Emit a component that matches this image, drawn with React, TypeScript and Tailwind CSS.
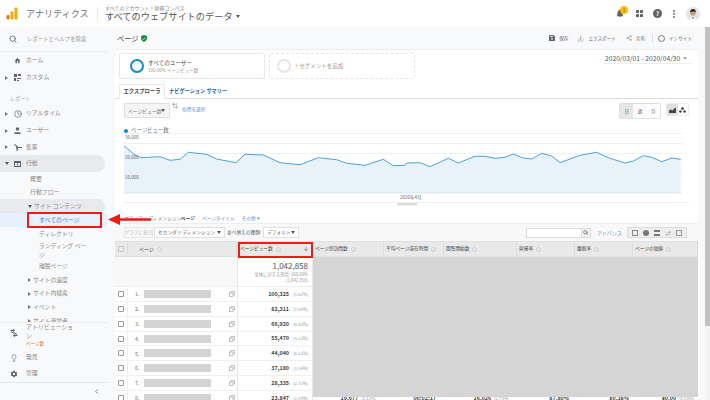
import { Search, Clock, Lightbulb, ChevronLeft, Download, Share2, ArrowDown } from "lucide-react";

const z6 = [[42,77],[72,103],[92,113],[150,110],[180,121],[210,118],[235,97],[290,103],[320,117],[378,128],[405,103],[460,105],[510,128],[570,134],[625,113],[680,119],[710,130],[765,136],[820,118],[850,137],[885,136]];
const z7 = [[-10,129],[30,128],[60,140],[115,115],[145,129],[195,109],[225,109],[255,115],[285,112],[310,102],[340,114],[365,117],[395,100],[425,108],[450,128],[510,106],[560,97],[595,113],[645,129],[670,123],[700,107],[725,112],[755,125],[785,114],[812,118]];
const pts = [
  ...z6.map(([x, y]) => [110 + x / 3 - 124, 120 + y / 3 - 133]),
  ...z7.map(([x, y]) => [410 + x / 3 - 124, 120 + y / 3 - 133]),
];
const line = pts.map((p) => p[0].toFixed(1) + "," + p[1].toFixed(1)).join(" ");
const area = "0,60 " + line + " " + pts[pts.length - 1][0].toFixed(1) + ",60";

const rows = [
  ["100,325", "(9.62%)"],
  ["82,311", "(7.89%)"],
  ["66,920", "(6.42%)"],
  ["55,470", "(5.32%)"],
  ["44,040", "(4.22%)"],
  ["37,180", "(3.56%)"],
  ["28,335", "(2.72%)"],
  ["23,847", "(2.29%)"],
];

function Arrow({ open = false }: { open?: boolean }) {
  return open ? (
    <span className="w-0 h-0 border-x-[2px] border-x-transparent border-t-[3px] border-t-[#555] shrink-0" />
  ) : (
    <span className="w-0 h-0 border-y-[2px] border-y-transparent border-l-[3px] border-l-[#777] shrink-0" />
  );
}

function TopItem({ h, label, icon, arrow, open, pill }: { h: string; label: string; icon: React.ReactNode; arrow?: boolean; open?: boolean; pill?: boolean }) {
  return (
    <div className={`${h} flex items-center shrink-0 w-[105px] ${pill ? "bg-[#e8eaed] rounded-r-full" : ""}`}>
      <span className="w-[9px] pl-[5px] flex items-center">{arrow && <Arrow open={open} />}</span>
      <span className="w-[17px] flex justify-center items-center text-[#5f6368]">{icon}</span>
      <span className="text-[5.8px] text-[#8a8a8a]">{label}</span>
    </div>
  );
}

function SubItem({ h, label }: { h: string; label: string }) {
  return (
    <div className={`${h} flex items-center pl-[30px] text-[5.9px] text-[#8a8a8a] shrink-0`}>{label}</div>
  );
}

function GroupItem({ h, label, pill, open }: { h: string; label: string; pill?: boolean; open?: boolean }) {
  return (
    <div className={`${h} flex items-center pl-[28px] gap-[2px] text-[5.8px] text-[#8a8a8a] shrink-0 w-[105px] ${pill ? "bg-[#e8eaed] rounded-r-full" : ""}`}>
      <Arrow open={open} />
      <span>{label}</span>
    </div>
  );
}

function Help() {
  return <span className="inline-block w-[5px] h-[5px] rounded-full border border-[#d0d0d0] ml-[3px] shrink-0" />;
}

function Header() {
  return (
    <div className="h-[27px] flex items-center bg-white shrink-0">
      <svg width="12" height="13" viewBox="0 0 12 13" className="ml-[6px]">
        <rect x="0.5" y="8" width="3" height="4.5" rx="1.4" fill="#e37400" />
        <rect x="4.5" y="4.5" width="3" height="8" rx="1" fill="#f9ab00" />
        <rect x="8.5" y="0.5" width="3" height="12" rx="1" fill="#f9ab00" />
      </svg>
      <span className="ml-[8px] text-[9.1px] text-[#6f7378] w-[65px] whitespace-nowrap">アナリティクス</span>
      <span className="w-px h-[14px] bg-[#e6e6e6] ml-[6px]" />
      <div className="ml-[7px] flex flex-col leading-none -mt-[2px]">
        <span className="text-[5px] text-[#888] leading-[7px]">すべてのアカウント &gt; 財務コンパス</span>
        <span className="text-[9.2px] text-[#555] leading-[11px] flex items-center gap-[3px]">
          すべてのウェブサイトのデータ
          <Arrow open />
        </span>
      </div>
      <div className="ml-auto flex items-center">
        <div className="relative mr-[12px]">
          <svg width="8" height="9" viewBox="0 0 24 24" fill="#5f6368" className="block"><path d="M12 23a2.5 2.5 0 0 0 2.5-2.5h-5A2.5 2.5 0 0 0 12 23zm8-6v-6c0-3.9-2.1-7-5.5-7.8V2a2.5 2.5 0 0 0-5 0v1.2C6 4 4 7.1 4 11v6l-2 2v1h20v-1z" /></svg>
          <span className="absolute -top-[3px] left-[4px] w-[8px] h-[8px] rounded-full bg-[#fbbc04] text-[4.5px] leading-[8px] text-center text-[#444]">1</span>
        </div>
        <svg width="7" height="7" viewBox="0 0 7 7" fill="#5f6368" className="mr-[10px]">
          <rect width="3" height="3" rx="0.4" /><rect x="4" width="3" height="3" rx="0.4" /><rect y="4" width="3" height="3" rx="0.4" /><rect x="4" y="4" width="3" height="3" rx="0.4" />
        </svg>
        <span className="w-[9px] h-[9px] rounded-full bg-[#5f6368] text-white text-[6px] leading-[9px] text-center font-bold mr-[11px]">?</span>
        <svg width="2" height="8" viewBox="0 0 2 8" fill="#5f6368" className="mr-[11px]">
          <circle cx="1" cy="1" r="0.9" /><circle cx="1" cy="4" r="0.9" /><circle cx="1" cy="7" r="0.9" />
        </svg>
        <svg width="14" height="14" viewBox="0 0 14 14" className="mr-[10px]">
          <circle cx="7" cy="7" r="7" fill="#e4e6e6" />
          <path d="M3 14c.4-3 2-4 4-4s3.600 1 4 4z" fill="#f4f4f4" />
          <circle cx="7" cy="6" r="2.600" fill="#c59a7c" />
          <path d="M4.200 5.500C4 2.500 6 2 7.300 2c1.700 0 2.700 1.200 2.500 3.500-1-1.200-4-1.200-5.600 0z" fill="#2c211c" />
          <path d="M6 10.200l1 1.800 1-1.800z" fill="#50606a" />
        </svg>
      </div>
    </div>
  );
}

function Sidebar() {
  return (
    <div className="w-[115px] shrink-0 bg-[#f8f9fa] flex flex-col h-[373px] overflow-hidden">
      <div className="h-[25px] w-[108px] flex items-center border-b border-[#eceef0] shrink-0">
        <Search size={8} strokeWidth={2.5} className="ml-[9px] text-[#5f6368]" />
        <span className="ml-[10px] text-[5.400px] text-[#999]">レポートとヘルプを除索</span>
      </div>
      <div className="h-[270px] overflow-hidden flex flex-col shrink-0">
        <TopItem h="h-[17px]" label="ホーム" icon={<svg width="7" height="7" viewBox="0 0 24 24" fill="#5f6368"><path d="M10 21v-7h4v7h5v-9h3L12 3 2 12h3v9z" /></svg>} />
        <TopItem h="h-[17px]" arrow label="カスタム" icon={<svg width="7" height="7" viewBox="0 0 7 7" fill="#5f6368"><rect width="3" height="3" /><rect x="4" width="3" height="2" /><rect y="4" width="2" height="3" /><rect x="3" y="4" width="4" height="1" /><rect x="3" y="6" width="2" height="1" /></svg>} />
        <div className="h-[19px] shrink-0 flex items-end pb-[2px] pl-[10px] text-[5.200px] text-[#a5a5a5]">レポート</div>
        <TopItem h="h-[17px]" arrow label="リアルタイム" icon={<Clock size={8} strokeWidth={2} />} />
        <TopItem h="h-[17px]" arrow label="ユーザー" icon={<svg width="7" height="7" viewBox="0 0 7 7" fill="#5f6368"><circle cx="3.500" cy="2" r="1.700" /><path d="M0.500 5.300h6V7h-6z" /></svg>} />
        <TopItem h="h-[16px]" arrow label="集客" icon={<svg width="8" height="7" viewBox="0 0 8 7" fill="none" stroke="#5f6368" strokeWidth="1"><path d="M0 1h2c1 0 1 5 2 5H2M3 3.500h5" /><circle cx="3.200" cy="3.500" r="0.800" fill="#5f6368" /></svg>} />
        <TopItem h="h-[17px]" arrow open pill label="行動" icon={<svg width="7" height="6" viewBox="0 0 7 6"><rect width="7" height="6" fill="#5f6368" /><rect x="1" y="2" width="2" height="3" fill="#e8eaed" /><rect x="3.700" y="2" width="2.300" height="3" fill="#e8eaed" /></svg>} />
        <SubItem h="h-[14px]" label="概要" />
        <SubItem h="h-[13px]" label="行動フロー" />
        <GroupItem h="h-[14px]" open pill label="サイト コンテンツ" />
        <div className="h-[14px] w-[107px] bg-[#e8f0fe] flex items-center pl-[39px] text-[5.900px] text-[#3b82e8] shrink-0">すべてのページ</div>
        <div className="h-[14px] flex items-center pl-[39px] text-[5.800px] text-[#8a8a8a] shrink-0">ディレクトリ</div>
        <div className="h-[18px] pl-[39px] w-[88px] text-[5.800px] text-[#8a8a8a] shrink-0 leading-[9px]">ランディング ページ</div>
        <div className="h-[14px] flex items-center pl-[39px] text-[5.800px] text-[#8a8a8a] shrink-0">離脱ページ</div>
        <GroupItem h="h-[14px]" label="サイトの速度" />
        <GroupItem h="h-[13px]" label="サイト内検索" />
        <GroupItem h="h-[14px]" label="イベント" />
        <GroupItem h="h-[14px]" label="サイト運営者" />
      </div>
      <div className="w-[108px] border-t border-[#eceef0] flex flex-col shrink-0">
        <div className="h-[26px] flex">
          <span className="w-[26px] flex justify-center items-center text-[#5f6368] h-[20px] pl-[2px]">
            <svg width="8" height="8" viewBox="0 0 8 8" fill="none" stroke="#5f6368" strokeWidth="1.100"><path d="M0.500 1.500h3.500M3 0.300l1.200 1.200L3 2.700M7.500 6.500H4M5 5.300L3.800 6.500 5 7.700M1.300 2.500c0 2 5.400 1 5.400 3" /></svg>
          </span>
          <div className="flex flex-col">
            <span className="text-[5.900px] text-[#8a8a8a] leading-[8.500px] w-[50px] break-all">アトリビューション</span>
            <span className="text-[4.500px] text-[#e8710a] leading-[6px]">ページ数</span>
          </div>
        </div>
        <TopRow h="h-[17px]" icon={<Lightbulb size={8} strokeWidth={1.800} />} label="発見" />
        <TopRow h="h-[15px]" icon={<svg width="8" height="8" viewBox="0 0 24 24" fill="#5f6368"><path fillRule="evenodd" d="M19.400 13c.1-.3.1-.7.1-1s0-.7-.1-1l2.100-1.600c.2-.2.300-.4.100-.7l-2-3.400c-.1-.2-.4-.3-.6-.2l-2.500 1a7 7 0 0 0-1.700-1l-.4-2.700c0-.2-.2-.4-.5-.4h-4c-.2 0-.4.200-.5.400l-.4 2.700c-.6.200-1.200.6-1.700 1l-2.500-1c-.2-.1-.5 0-.6.200l-2 3.400c-.1.300-.1.500.1.700L4.600 11c-.1.300-.1.700-.1 1s0 .7.100 1l-2.100 1.600c-.2.200-.3.400-.1.700l2 3.400c.1.200.4.300.6.200l2.500-1c.5.400 1.100.8 1.700 1l.4 2.700c0 .2.300.4.500.4h4c.3 0 .5-.2.500-.4l.4-2.700c.6-.2 1.200-.6 1.700-1l2.500 1c.2.100.5 0 .6-.2l2-3.400c.1-.3.1-.5-.1-.7zM12 15.500a3.500 3.500 0 1 1 0-7 3.500 3.500 0 0 1 0 7z" /></svg>} label="管理" />
        <div className="border-t border-[#e4e6e8] h-[17px] flex items-center justify-end pr-[8px] mt-[1px]">
          <ChevronLeft size={7} strokeWidth={2.500} className="text-[#5f6368]" />
        </div>
      </div>
    </div>
  );
}

function TopRow({ h, icon, label }: { h: string; icon: React.ReactNode; label: string }) {
  return (
    <div className={`${h} flex items-center`}>
      <span className="w-[26px] flex justify-center pl-[2px] text-[#5f6368]">{icon}</span>
      <span className="text-[5.800px] text-[#8a8a8a]">{label}</span>
    </div>
  );
}

function Action({ icon, label }: { icon: React.ReactNode; label: string }) {
  return (
    <span className="flex items-center gap-[4px] text-[4.600px] text-[#666]">
      <span className="text-[#5f6368] flex">{icon}</span>
      {label}
    </span>
  );
}

function PageBar() {
  return (
    <div className="h-[23px] bg-[#f8f9fa] border-b border-[#eceef0] flex items-center shrink-0 pl-[2px] pr-[6px]">
      <span className="text-[7.200px] text-[#444]">ページ</span>
      <svg width="6" height="7" viewBox="0 0 7 8" className="ml-[3px]"><path d="M3.500 0L7 1.200v2.600C7 6 5.300 7.400 3.500 8 1.700 7.400 0 6 0 3.800V1.200z" fill="#1e8e3e" /><path d="M1.800 4l1.200 1.200 2.200-2.200" stroke="#fff" strokeWidth="0.800" fill="none" /></svg>
      <div className="ml-auto flex items-center">
        <Action label="保存" icon={<svg width="6" height="6" viewBox="0 0 7 7" fill="#5f6368"><path d="M0 1a1 1 0 0 1 1-1h4.200L7 1.800V6a1 1 0 0 1-1 1H1a1 1 0 0 1-1-1z" /><rect x="1.500" y="1" width="3" height="1.300" fill="#f8f9fa" /><circle cx="3.500" cy="4.500" r="1" fill="#f8f9fa" /></svg>} />
        <span className="w-[9px]" />
        <Action label="エクスポート" icon={<Download size={7} strokeWidth={1.200} />} />
        <span className="w-[10px]" />
        <Action label="共有" icon={<Share2 size={6} strokeWidth={1.300} />} />
        <span className="w-px h-[8px] bg-[#ddd] ml-[7px] mr-[5px]" />
        <Action label="インサイト" icon={<span className="w-[7px] h-[7px] rounded-full border border-[#7a7a7a] block" />} />
      </div>
    </div>
  );
}

function SegmentRow() {
  return (
    <div className="h-[33px] flex shrink-0 pl-[4px] pt-[3px] pr-[6px]">
      <div className="w-[146px] h-[26px] border border-[#e8e8e8] rounded-[2px] flex items-center pl-[10px]">
        <span className="w-[14px] h-[14px] rounded-full border-[2px] border-[#0d8ecf] shrink-0" />
        <div className="ml-[4px] flex flex-col">
          <span className="text-[5.600px] text-[#555] leading-[7px]">すべてのユーザー</span>
          <span className="text-[4.500px] text-[#999] leading-[6px]">100.00% ページビュー数</span>
        </div>
      </div>
      <div className="w-[146px] h-[26px] ml-[4px] border border-dashed border-[#e8e8e8] rounded-[2px] flex items-center pl-[7px]">
        <span className="w-[14px] h-[14px] rounded-full border-[2px] border-[#e6e6e6] shrink-0" />
        <span className="ml-[4px] text-[5.500px] text-[#999]">+ セグメントを追加</span>
      </div>
      <div className="ml-auto h-[11px] border-b border-[#eee] flex items-center gap-[3px] text-[6.700px] text-[#555] pl-[1px] w-[88px] whitespace-nowrap">
        <span>2020/03/01 - 2020/04/30</span>
        <span className="w-0 h-0 border-x-[2px] border-x-transparent border-t-[3px] border-t-[#aaa] shrink-0" />
      </div>
    </div>
  );
}

function Tabs() {
  return (
    <div className="h-[15px] border-b border-[#ddd] flex items-end shrink-0 pl-[4px] mt-[1px]">
      <div className="w-[46px] h-[15px] border border-b-0 border-[#e8e8e8] bg-white -mb-px flex items-center justify-center text-[5.300px] font-bold text-[#444] whitespace-nowrap">エクスプローラ</div>
      <div className="ml-[4px] h-[14px] flex items-center text-[5.200px] font-bold text-[#2a5ea8] whitespace-nowrap">ナビゲーション サマリー</div>
    </div>
  );
}

function Controls() {
  return (
    <div className="h-[24px] flex items-start shrink-0 pl-[9px] pt-[4px] pr-[9px]">
      <div className="w-[46px] h-[15px] border border-[#e0e0e0] bg-[#f5f5f5] flex items-center justify-between pl-[3px] pr-[4px] text-[4.800px] text-[#777] rounded-[1px] whitespace-nowrap">
        ページビュー数
        <Arrow open />
      </div>
      <span className="ml-[2px] text-[6px] text-[#666] leading-[6px]">⇅</span>
      <span className="ml-[4px] mt-[3px] text-[4.700px] text-[#6a9ad4] whitespace-nowrap">指標を選択</span>
      <div className="ml-auto flex gap-[5px]">
        <div className="h-[16px] w-[42px] border border-[#e0e0e0] flex text-[4.500px] text-[#666] rounded-[1px]">
          <span className="flex-1 bg-[#e6e6e6] flex items-center justify-center">日</span>
          <span className="flex-1 flex items-center justify-center bg-[#fafafa]">週</span>
          <span className="flex-1 flex items-center justify-center">月</span>
        </div>
        <div className="h-[13px] w-[23px] border border-[#eee] flex rounded-[1px]">
          <span className="flex-1 bg-[#e0e0e0] flex items-center justify-center">
            <svg width="7" height="6" viewBox="0 0 8 7" fill="#444"><path d="M0 7V4l2-1 2 1 3-3 1 0v6z" /></svg>
          </span>
          <span className="flex-1 flex items-center justify-center">
            <svg width="7" height="6" viewBox="0 0 8 7" fill="#444"><circle cx="4" cy="1.800" r="1.600" /><circle cx="1.600" cy="5.300" r="1.500" /><circle cx="6.400" cy="5.300" r="1.500" /></svg>
          </span>
        </div>
      </div>
    </div>
  );
}

function Chart() {
  return (
    <div className="flex flex-col shrink-0 pl-[9px]">
      <div className="h-[11px] mt-[2px] flex items-center text-[5.400px] text-[#777]">
        <span className="w-[4px] h-[4px] rounded-full bg-[#058dc7] mr-[3px]" />
        ページビュー数
      </div>
      <svg width="566" height="73" viewBox="0 0 566 73" className="block mt-[-3px]" style={{ fontFamily: "'Noto Sans CJK JP'" }}>
        <polygon points={area} fill="#e8f2f9" />
        {[0, 10, 20, 40].map((y) => (
          <line key={y} x1="0" x2="558" y1={y + 0.5} y2={y + 0.5} stroke="#efefef" />
        ))}
        <line x1="0" x2="558" y1="60" y2="60" stroke="#dde4e8" />
        <polyline points={line} fill="none" stroke="#3a9ad2" strokeWidth="0.900" />
        <text x="1" y="6" fontSize="4.500" fill="#666">30,000</text>
        <text x="1" y="25.500" fontSize="4.500" fill="#666">20,000</text>
        <text x="1" y="45.500" fontSize="4.500" fill="#666">10,000</text>
        <text x="276" y="66" fontSize="4.500" fill="#666">2020年4月</text>
        <line x1="0" x2="565" y1="69.500" y2="69.500" stroke="#eee" />
        <rect x="273" y="70" width="20" height="2.500" fill="#dcdcdc" />
      </svg>
    </div>
  );
}

function DimRow() {
  return (
    <div className="h-[13px] mt-[5px] pt-[3px] flex items-center pl-[9px] text-[4.700px] shrink-0 border-b border-[#eeeeee] whitespace-nowrap">
      <span className="text-[#777] w-[57px]">プライマリ ディメンション:</span>
      <span className="text-[#444] font-bold">ページ</span>
      <span className="text-[#6a8ad8] ml-[7px]">ページタイトル</span>
      <span className="text-[#6a8ad8] ml-[7px]">その他 ▾</span>
    </div>
  );
}

function Toolbar() {
  return (
    <div className="h-[17px] bg-[#f8f8f8] flex items-center pl-[9px] pr-[11px] shrink-0 text-[4.700px] text-[#666] whitespace-nowrap">
      <span className="w-[29px] h-[11px] border border-[#e8e8e8] text-[#c4c4c4] flex items-center justify-center">グラフに表示</span>
      <span className="ml-[1px] w-[71px] h-[11px] border border-[#e0e0e0] bg-white flex items-center justify-between px-[3px]">セカンダリ ディメンション<Arrow open /></span>
      <span className="ml-[2px]">並べ替えの種類:</span>
      <span className="ml-[2px] w-[36px] h-[11px] border border-[#e0e0e0] bg-white flex items-center justify-between px-[3px]">デフォルト<Arrow open /></span>
      <div className="ml-auto flex items-center">
        <div className="w-[65px] h-[10px] border border-[#ddd] bg-white flex justify-end">
          <span className="w-[9px] bg-[#f0f0f0] border-l border-[#ddd] flex items-center justify-center"><Search size={5} strokeWidth={3} className="text-[#555]" /></span>
        </div>
        <span className="ml-[6px] text-[#6a9ad4] text-[5px]">アドバンス</span>
        <div className="ml-[5px] w-[60px] h-[11px] border border-[#ddd] bg-[#eee] flex items-center justify-around px-[1px] text-[#777]">
          <span className="w-[6px] h-[6px] border border-[#888] block" />
          <span className="w-[6px] h-[6px] rounded-full bg-[#777] block" />
          <span className="w-[6px] h-[6px] border-t-2 border-b-2 border-[#777] block" />
          <span className="text-[5px] leading-[6px]">⇄</span>
          <span className="w-[6px] h-[6px] border border-[#999] block" />
        </div>
      </div>
    </div>
  );
}

function HeadCell({ w, label }: { w: string; label: string }) {
  return (
    <div className={`${w} h-full flex items-center pl-[2px] border-r border-[#ddd] text-[4.700px] text-[#444] whitespace-nowrap`}>
      {label}
      <Help />
    </div>
  );
}

function Table() {
  const last = [
    ["w-[67px]", "19,677", "(2.22%)"],
    ["w-[60px]", "00:02:17", ""],
    ["w-[73px]", "16,026", "(2.73%)"],
    ["w-[60px]", "87.80%", ""],
    ["w-[60px]", "80.38%", ""],
    ["w-[65px]", "¥0.00", "(0.00%)"],
  ];
  return (
    <div className="relative flex flex-col shrink-0">
      <div className="h-[16px] bg-[#e9e9e9] flex border-y border-[#e0e0e0] shrink-0">
        <div className="w-[13px] h-full border-r border-[#ddd] flex items-center justify-center">
          <span className="w-[6px] h-[6px] border border-[#ccc] block" />
        </div>
        <div className="w-[109px] h-full flex items-center pl-[11px] border-r border-[#ddd] text-[4.900px] text-[#444]">
          ページ<Help />
        </div>
        <div className="w-[76px] h-full flex items-center pl-[3px] pr-[3px] border-r border-[#ddd] text-[4.700px] text-[#444] whitespace-nowrap">
          ページビュー数<Help />
          <ArrowDown size={6} strokeWidth={2} className="ml-auto text-[#555]" />
        </div>
        <HeadCell w="w-[71px]" label="ページ別訪問数" />
        <HeadCell w="w-[60px]" label="平均ページ滞在時間" />
        <HeadCell w="w-[73px]" label="閲覧開始数" />
        <HeadCell w="w-[58px]" label="直帰率" />
        <HeadCell w="w-[58px]" label="離脱率" />
        <HeadCell w="w-[65px]" label="ページの価値" />
      </div>
      <div className="h-[30px] flex bg-[#f8f8f8] border-b border-[#eee] shrink-0">
        <div className="w-[122px]" />
        <div className="w-[76px] bg-white border-x border-[#e8e8e8] flex flex-col items-end pr-[4px] pt-[4px] text-[#999]">
          <span className="text-[8px] leading-[10px] text-[#555]">1,042,858</span>
          <span className="text-[4.300px] leading-[6px] whitespace-nowrap">全体に対する割合: 100.00%</span>
          <span className="text-[4.300px] leading-[6px]">(1,042,858)</span>
        </div>
      </div>
      {rows.map((r, i) => (
        <div key={i} className="h-[14.860px] flex items-center border-b border-[#f0f0f0] bg-white shrink-0">
          <div className="w-[13px] h-full border-r border-[#f0f0f0] flex items-center justify-center">
            <span className="w-[6px] h-[6px] border border-[#999] rounded-[1px] block" />
          </div>
          <div className="w-[109px] h-full flex items-center">
            <span className="text-[5px] text-[#666] w-[16px] pl-[7px]">{i + 1}.</span>
            <span className="w-[67px] h-[8px] bg-[#d4d4d4] block" />
            <svg width="6" height="6" viewBox="0 0 6 6" fill="none" stroke="#999" strokeWidth="0.600" className="ml-[18px]"><rect x="0.500" y="2" width="3.500" height="3.500" /><path d="M2 2V0.500h3.500V4H4" /></svg>
          </div>
          <div className="w-[76px] h-full border-x border-[#e8e8e8] flex items-center justify-end pr-[4px] gap-[3px]">
            <span className="text-[5.400px] text-[#444] font-bold">{r[0]}</span>
            <span className="text-[4.200px] text-[#999] w-[16px] text-right whitespace-nowrap">{r[1]}</span>
          </div>
          {i === 7 && (
            <div className="flex h-full">
              {last.map((c, j) => (
                <div key={j} className={`${c[0]} flex items-center justify-end gap-[3px] pr-[4px] whitespace-nowrap`}>
                  <span className="text-[5.400px] text-[#444] font-bold">{c[1]}</span>
                  {c[2] && <span className="text-[4.200px] text-[#999]">{c[2]}</span>}
                </div>
              ))}
            </div>
          )}
        </div>
      ))}
      <div className="absolute left-[198px] top-[16px] w-[385px] h-[140px] bg-[#d5d5d5]" />
    </div>
  );
}

export default function App() {
  return (
    <div className="relative w-[710px] h-[400px] overflow-hidden bg-white flex flex-col font-['Noto_Sans_CJK_JP',sans-serif]">
      <Header />
      <div className="flex h-[373px]">
        <Sidebar />
        <div className="w-[583px] shrink-0 h-[373px] overflow-hidden flex flex-col">
          <PageBar />
          <SegmentRow />
          <Tabs />
          <Controls />
          <Chart />
          <DimRow />
          <Toolbar />
          <Table />
        </div>
        <div className="w-[12px] bg-[#f8f9fa] flex justify-end">
          <div className="w-[5px] h-full bg-[#f5f5f5]">
            <div className="h-[299px] bg-[#c1c1c1]" />
          </div>
        </div>
      </div>
      <div className="absolute left-[27px] top-[212px] w-[75px] h-[16px] border-[2px] border-[#ee1c14]" />
      <div className="absolute left-[238px] top-[242px] w-[75px] h-[16px] border-[2px] border-[#ee1c14]" />
      <svg className="absolute left-[107px] top-[212px]" width="45" height="14" viewBox="0 0 45 14">
        <path d="M1 7.500L13 2V6.200H44V8.800H13V13z" fill="#ee1c14" />
      </svg>
    </div>
  );
}
